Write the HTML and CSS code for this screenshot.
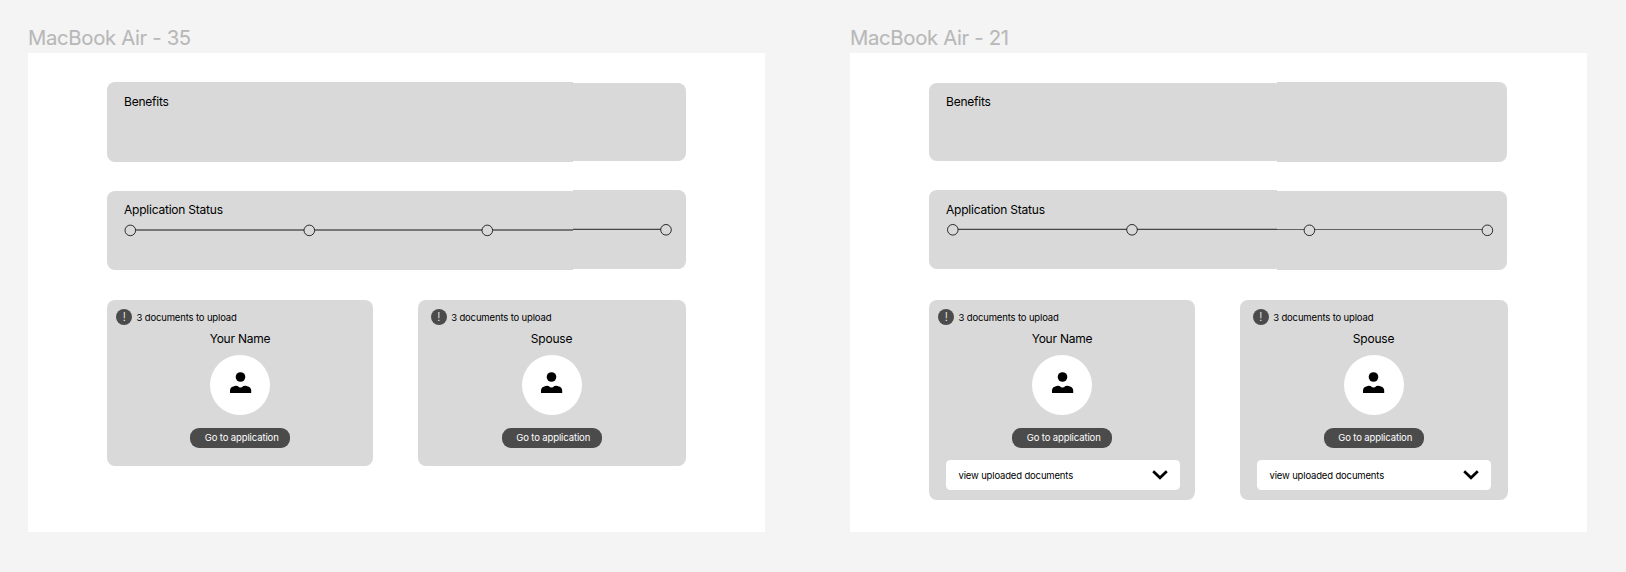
FILE: index.html
```html
<!DOCTYPE html>
<html lang="en">
<head>
<meta charset="utf-8">
<title>MacBook Air frames</title>
<link rel="stylesheet" href="styles.css">
</head>
<body>
<svg class="defs" width="0" height="0" aria-hidden="true">
  <symbol id="person" viewBox="0 0 22 22">
    <circle cx="10.5" cy="5" r="4.8"/>
    <path d="M0 21v-2.5C0 15.6 2 14.4 5.6 13.7L7.6 13.9Q10.5 17 13.4 13.9L15.4 13.7C19 14.4 21.2 15.6 21.2 18.5V21Z"/>
  </symbol>
  <symbol id="chevron" viewBox="0 0 16 10">
    <path d="M1.2 1.2 8 7.8 14.8 1.2" fill="none" stroke="#000" stroke-width="2.7"/>
  </symbol>
</svg>
<main class="canvas">
  <section class="frame frame-a">
    <h1 class="frame-name">MacBook Air - 35</h1>
    <div class="board">
      <div class="panel benefits"><h2>Benefits</h2></div>
      <div class="panel status">
        <h2>Application Status</h2>
        <svg class="track" width="550" height="14">
          <g fill="#d9d9d9" stroke="#000">
            <path d="M6 7H449" stroke-opacity=".9"/>
            <path d="M449 6.300H541" stroke-opacity=".85"/>
            <g stroke-width=".8"><circle cx="6.300" cy="7.400" r="5.300"/><circle cx="185.300" cy="7.400" r="5.300"/><circle cx="363.300" cy="7.400" r="5.300"/><circle cx="542" cy="6.800" r="5.300"/></g>
          </g>
        </svg>
      </div>
      <div class="cards">
        <article class="card you">
          <div class="notice"><span class="alert">!</span>3 documents to upload</div>
          <h3>Your Name</h3>
          <div class="avatar"><svg width="22" height="22"><use href="#person"/></svg></div>
          <div class="button">Go to application</div>
        </article>
        <article class="card spouse">
          <div class="notice"><span class="alert">!</span>3 documents to upload</div>
          <h3>Spouse</h3>
          <div class="avatar"><svg width="22" height="22"><use href="#person"/></svg></div>
          <div class="button">Go to application</div>
        </article>
      </div>
    </div>
  </section>
  <section class="frame frame-b">
    <h1 class="frame-name">MacBook Air - 21</h1>
    <div class="board">
      <div class="panel benefits"><h2>Benefits</h2></div>
      <div class="panel status">
        <h2>Application Status</h2>
        <svg class="track" width="550" height="14">
          <g fill="#d9d9d9" stroke="#000">
            <path d="M7 6.300H331" stroke-opacity=".85"/>
            <path d="M331 6.500H541" stroke-opacity=".55"/>
            <g stroke-width=".8"><circle cx="6.800" cy="6.800" r="5.300"/><circle cx="186" cy="6.800" r="5.300"/><circle cx="363.400" cy="7.300" r="5.300"/><circle cx="541.400" cy="7.300" r="5.300"/></g>
          </g>
        </svg>
      </div>
      <div class="cards">
        <article class="card you">
          <div class="notice"><span class="alert">!</span>3 documents to upload</div>
          <h3>Your Name</h3>
          <div class="avatar"><svg width="22" height="22"><use href="#person"/></svg></div>
          <div class="button">Go to application</div>
          <div class="select">view uploaded documents<svg width="16" height="10"><use href="#chevron"/></svg></div>
        </article>
        <article class="card spouse">
          <div class="notice"><span class="alert">!</span>3 documents to upload</div>
          <h3>Spouse</h3>
          <div class="avatar"><svg width="22" height="22"><use href="#person"/></svg></div>
          <div class="button">Go to application</div>
          <div class="select">view uploaded documents<svg width="16" height="10"><use href="#chevron"/></svg></div>
        </article>
      </div>
    </div>
  </section>
</main>
</body>
</html>
```

FILE: styles.css
```css
* { box-sizing: border-box; }
body { margin: 0; background: #f4f4f4; color: #000; font-family: Inter, "Liberation Sans", sans-serif; }
h1, h2, h3 { margin: 0; font-weight: 400; white-space: nowrap; }
svg { display: block; overflow: visible; }
.defs { position: absolute; }
.canvas { display: flex; height: 572px; padding: 24px 39px 0 28px; justify-content: space-between; overflow: hidden; }
.frame { width: 737px; }
.frame-name { height: 29px; line-height: 28px; font-size: 20.300px; letter-spacing: -.32px; color: #b8b8b8; -webkit-text-stroke: .1px #b8b8b8; }
.board { height: 479px; background: #fff; padding: 29px 0 0 79px; }

/* panels are drawn as a left and a right segment with slightly different edges */
.panel { position: relative; isolation: isolate; width: 579px; padding: 12px 0 0 17px; }
.panel::before, .panel::after { content: ""; position: absolute; z-index: -1; background: #d9d9d9; }
.panel::before { left: 0; width: var(--seam); top: var(--lt); bottom: var(--lb); border-radius: 8px 0 0 8px; }
.panel::after { left: var(--seam); right: 0; top: var(--rt); bottom: var(--rb); border-radius: 0 8px 8px 0; }
.frame-a .panel { --seam: 466px; --lt: 0px; --lb: 0px; --rt: 1px; --rb: 1px; }
.frame-b .panel { --seam: 348px; --lt: 1px; --lb: 1px; --rt: 0px; --rb: 0px; width: 578px; }
.frame-a .status { --lt: 1px; --lb: 0px; --rt: 0px; --rb: 1px; }
.frame-b .status { --lt: 0px; --lb: 1px; --rt: 1px; --rb: 0px; }
.benefits { height: 80px; }
.status { height: 80px; margin-top: 28px; }
.panel h2 { font-size: 12px; line-height: 16px; letter-spacing: -.22px; }
.status { padding-top: 12px; }
.status .track { margin-top: 5px; }

.cards { display: flex; align-items: flex-start; gap: 45px; margin-top: 30px; }
.card { display: flex; flex-direction: column; align-items: center; height: 166px; border-radius: 8px; background: #d9d9d9; padding-top: 9px; }
.you { width: 266px; }
.spouse { width: 268px; }
.notice { align-self: flex-start; display: flex; align-items: center; gap: 4.200px; height: 16px; margin-left: 9px; font-size: 9.500px; letter-spacing: -.15px; white-space: nowrap; }
.spouse .notice { margin-left: 12.700px; }
.alert { display: flex; align-items: center; justify-content: center; width: 16.300px; height: 16.300px; border-radius: 50%; background: #4b4b4b; color: #fff; font-size: 11px; font-weight: 300; }
.card h3 { font-size: 12px; line-height: 16px; margin-top: 6px; letter-spacing: -.22px; }
.avatar { display: flex; justify-content: center; width: 60px; height: 60px; margin-top: 8px; padding: 17px 0 0 1px; border-radius: 50%; background: #fff; }
.button { width: 100px; height: 20px; margin-top: 12.500px; padding-left: 14.700px; border-radius: 9px; background: #4b4b4b; color: #fff; font-size: 9.500px; letter-spacing: -.12px; line-height: 20px; white-space: nowrap; }
.spouse .avatar, .spouse .button, .spouse h3 { margin-right: 1px; }
.frame-b .card { height: 200px; }
.select { display: flex; align-items: center; justify-content: space-between; width: 234px; height: 30px; margin: 12.500px 0 0 2px; padding: 0 12px 0 12.500px; border-radius: 4.500px; background: #fff; font-size: 9.500px; letter-spacing: -.16px; white-space: nowrap; }
.spouse .select { margin-left: 0; }
```
